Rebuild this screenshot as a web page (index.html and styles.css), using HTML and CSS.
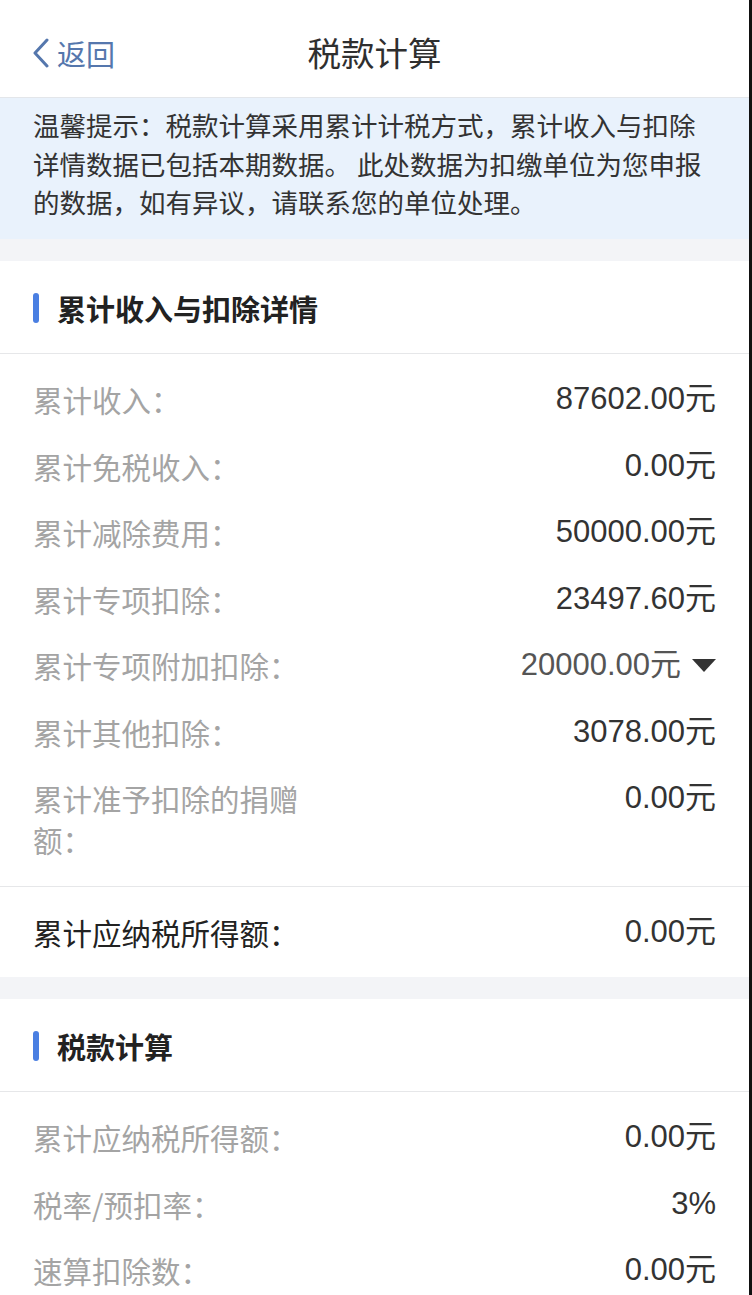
FILE: index.html
```html
<!DOCTYPE html>
<html lang="zh">
<head>
<meta charset="utf-8">
<title>税款计算</title>
<link rel="stylesheet" href="styles.css">
</head>
<body>
<div class="page">
  <header class="nav">
    <div class="back">
      <svg class="chev" width="17" height="30" viewBox="0 0 17 30"><path d="M15 2 L3 15 L15 28" fill="none" stroke="currentColor" stroke-width="3" stroke-linecap="round" stroke-linejoin="round"/></svg>
      <span>返回</span>
    </div>
    <div class="title">税款计算</div>
  </header>

  <div class="tip">温馨提示：税款计算采用累计计税方式，累计收入与扣除<br>详情数据已包括本期数据。 此处数据为扣缴单位为您申报<br>的数据，如有异议，请联系您的单位处理。</div>

  <div class="gap"></div>

  <section class="card">
    <div class="sec-head"><span class="bar"></span><span class="sec-title">累计收入与扣除详情</span></div>
    <div class="list">
      <div class="row"><span class="label">累计收入：</span><span class="value">87602.00元</span></div>
      <div class="row"><span class="label">累计免税收入：</span><span class="value">0.00元</span></div>
      <div class="row"><span class="label">累计减除费用：</span><span class="value">50000.00元</span></div>
      <div class="row"><span class="label">累计专项扣除：</span><span class="value">23497.60元</span></div>
      <div class="row"><span class="label">累计专项附加扣除：</span><span class="value drop">20000.00元<svg class="tri" width="24" height="13" viewBox="0 0 24 13"><path d="M0 0 L24 0 L12 13 Z" fill="#333"/></svg></span></div>
      <div class="row"><span class="label">累计其他扣除：</span><span class="value">3078.00元</span></div>
      <div class="row"><span class="label">累计准予扣除的捐赠额：</span><span class="value">0.00元</span></div>
    </div>
    <div class="total"><span class="label dark">累计应纳税所得额：</span><span class="value">0.00元</span></div>
  </section>

  <div class="gap"></div>

  <section class="card">
    <div class="sec-head"><span class="bar"></span><span class="sec-title">税款计算</span></div>
    <div class="list">
      <div class="row"><span class="label">累计应纳税所得额：</span><span class="value">0.00元</span></div>
      <div class="row"><span class="label">税率/预扣率：</span><span class="value">3%</span></div>
      <div class="row"><span class="label">速算扣除数：</span><span class="value">0.00元</span></div>
    </div>
  </section>
</div>
</body>
</html>
```

FILE: styles.css
```css
html, body {
  margin: 0;
  padding: 0;
  background: #111;
}
body {
  font-family: "Liberation Sans", "Noto Sans CJK SC", sans-serif;
  color: #333;
  width: 752px;
  height: 1295px;
  overflow: hidden;
}
.page {
  width: 749px;
  height: 1295px;
  background: #ffffff;
  overflow: hidden;
}
.nav {
  height: 97px;
  border-bottom: 1px solid #e3e6ea;
  display: flex;
  align-items: center;
  justify-content: center;
  position: relative;
  background: #fff;
}
.back {
  position: absolute;
  left: 32px;
  top: 0;
  height: 97px;
  display: flex;
  align-items: center;
  gap: 8px;
  color: #5577ad;
  font-family: "Noto Sans CJK SC", sans-serif;
  font-size: 29px;
  padding-top: 8px;
  box-sizing: border-box;
}
.chev {
  display: block;
}
.title {
  font-family: "Noto Sans CJK SC", sans-serif;
  font-size: 33.5px;
  color: #2f2f2f;
  padding-top: 6px;
}
.tip {
  background: #e9f2fc;
  font-family: "Noto Sans CJK SC", sans-serif;
  font-size: 26.5px;
  line-height: 38.5px;
  color: #333;
  padding: 8px 10px 17px 33px;
  height: 116px;
  white-space: nowrap;
}
.gap {
  height: 22px;
  background: #f3f4f7;
}
.card {
  background: #fff;
}
.sec-head {
  display: flex;
  align-items: center;
  gap: 18px;
  padding: 29px 33px 27px;
  border-bottom: 1px solid #e6e7e9;
  height: 36px;
}
.bar {
  width: 6px;
  height: 30px;
  border-radius: 3px;
  background: #4a7fe2;
}
.sec-title {
  font-family: "Noto Sans CJK SC", sans-serif;
  font-size: 29px;
  font-weight: 600;
  color: #222;
  line-height: 36px;
}
.list {
  padding: 12px 0 14px;
  border-bottom: 1px solid #e6e7e9;
}
.card:last-child .list {
  border-bottom: none;
}
.row {
  display: flex;
  justify-content: space-between;
  align-items: flex-start;
  padding: 13px 33px;
  line-height: 40.5px;
}
.label {
  font-family: "Noto Sans CJK SC", sans-serif;
  font-size: 29.5px;
  color: #a4a4a4;
  max-width: 285px;
}
.label.dark {
  color: #222;
  max-width: none;
}
.value {
  font-size: 31px;
  color: #333;
  white-space: nowrap;
}
.drop {
  color: #555;
  display: flex;
  align-items: center;
  gap: 11px;
}
.tri {
  display: block;
}
.total {
  display: flex;
  justify-content: space-between;
  align-items: center;
  padding: 25px 33px;
  line-height: 40px;
}
```
